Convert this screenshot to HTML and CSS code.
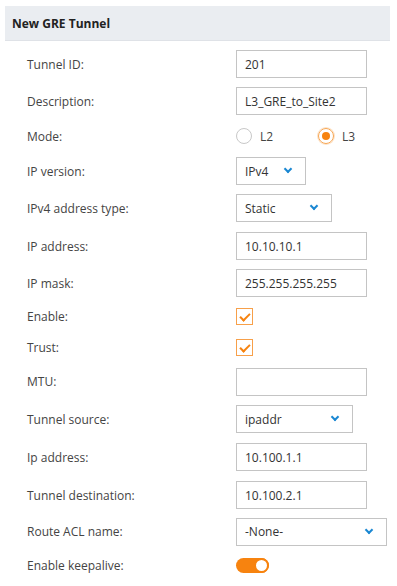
FILE: index.html
```html
<!DOCTYPE html>
<html lang="en">
  <head>
    <meta charset="UTF-8" />
    <meta name="viewport" content="width=device-width, initial-scale=1.0" />
    <title>New GRE Tunnel</title>
    <link rel="stylesheet" href="styles.css">
  </head>
  <body>
    <main class="panel">
      <div class="panel-header">New GRE Tunnel</div>

      <form class="form">
        <div class="row">
          <label class="label">Tunnel ID:</label>
          <div class="input w131">201</div>
        </div>

        <div class="row sm">
          <label class="label">Description:</label>
          <div class="input w131">L3_GRE_to_Site2</div>
        </div>

        <div class="row radio-row">
          <label class="label">Mode:</label>
          <div class="radios">
            <span class="radio"><span class="circle"></span>L2</span>
            <span class="radio checked"><span class="circle"></span>L3</span>
          </div>
        </div>

        <div class="row sm">
          <label class="label">IP version:</label>
          <div class="select w70">IPv4<span class="chevron"></span></div>
        </div>

        <div class="row">
          <label class="label">IPv4 address type:</label>
          <div class="select w96">Static<span class="chevron"></span></div>
        </div>

        <div class="row">
          <label class="label">IP address:</label>
          <div class="input w131">10.10.10.1</div>
        </div>

        <div class="row sm">
          <label class="label">IP mask:</label>
          <div class="input w131">255.255.255.255</div>
        </div>

        <div class="row check-row">
          <label class="label">Enable:</label>
          <span class="checkbox"></span>
        </div>

        <div class="row check-row">
          <label class="label">Trust:</label>
          <span class="checkbox"></span>
        </div>

        <div class="row mid">
          <label class="label">MTU:</label>
          <div class="input w131"></div>
        </div>

        <div class="row">
          <label class="label">Tunnel source:</label>
          <div class="select w117">ipaddr<span class="chevron"></span></div>
        </div>

        <div class="row">
          <label class="label">Ip address:</label>
          <div class="input w131">10.100.1.1</div>
        </div>

        <div class="row">
          <label class="label">Tunnel destination:</label>
          <div class="input w131">10.100.2.1</div>
        </div>

        <div class="row acl">
          <label class="label">Route ACL name:</label>
          <div class="select w151">-None-<span class="chevron"></span></div>
        </div>

        <div class="row last">
          <label class="label">Enable keepalive:</label>
          <span class="toggle"><span class="knob"></span></span>
        </div>
      </form>
    </main>
  </body>
</html>
```

FILE: styles.css
```css
* {
  margin: 0;
  padding: 0;
  box-sizing: border-box;
}

body {
  background-color: #fff;
  font-family: "Open Sans", "Noto Sans", sans-serif;
  font-size: 12px;
  color: #444;
}

.panel {
  width: 385px;
  margin: 6px 0 0 5px;
}

.panel-header {
  height: 35px;
  padding-left: 7px;
  display: flex;
  align-items: center;
  background-color: #eaedf1;
  border-bottom: 1px solid #dfe2e7;
  font-weight: 700;
  font-size: 12px;
  color: #222;
}

.form {
  padding: 4px 0 0 22px;
}

.row {
  height: 38px;
  display: flex;
  align-items: center;
}

.row.sm { height: 36px; }
.row.radio-row { height: 34px; }
.row.check-row { height: 31px; }
.row.mid { height: 37px; }
.row.acl { height: 35px; }
.row.last { height: 32px; }

.label {
  width: 209px;
  flex-shrink: 0;
  color: #444;
}

.input,
.select {
  height: 28px;
  border: 1px solid #c4c4c4;
  padding: 0 8px;
  display: flex;
  align-items: center;
  color: #333;
  background-color: #fff;
}

.select {
  justify-content: space-between;
  padding-right: 14px;
}

.w70 { width: 70px; }
.w96 { width: 96px; }
.w117 { width: 117px; }
.w131 { width: 131px; }
.w151 { width: 151px; }

.chevron {
  width: 6px;
  height: 6px;
  border-right: 2px solid #1a87d2;
  border-bottom: 2px solid #1a87d2;
  transform: translateY(-2px) rotate(45deg);
}

.radios {
  display: flex;
  gap: 0;
}

.radio {
  width: 82px;
  display: flex;
  align-items: center;
  gap: 8px;
  color: #444;
}

.circle {
  width: 16px;
  height: 16px;
  border-radius: 50%;
  border: 1px solid #c8c8c8;
  display: flex;
  justify-content: center;
  align-items: center;
}

.radio.checked .circle {
  border-color: #f7a654;
  box-shadow: 0 0 0 1px #fde3c8;
}

.radio.checked .circle::after {
  content: "";
  width: 8px;
  height: 8px;
  border-radius: 50%;
  background-color: #f7830f;
}

.checkbox {
  width: 17px;
  height: 17px;
  border: 1px solid #f7a04a;
  display: flex;
  justify-content: center;
  align-items: center;
}

.checkbox::after {
  content: "";
  width: 8px;
  height: 4px;
  border-left: 2px solid #f7830f;
  border-bottom: 2px solid #f7830f;
  transform: translateY(-1px) rotate(-45deg);
}

.toggle {
  width: 33px;
  height: 15px;
  border-radius: 8px;
  background-color: #f7830f;
  display: flex;
  justify-content: flex-end;
}

.knob {
  width: 15px;
  height: 15px;
  border-radius: 50%;
  border: 2px solid #f7830f;
  background-color: #fff;
}
```
